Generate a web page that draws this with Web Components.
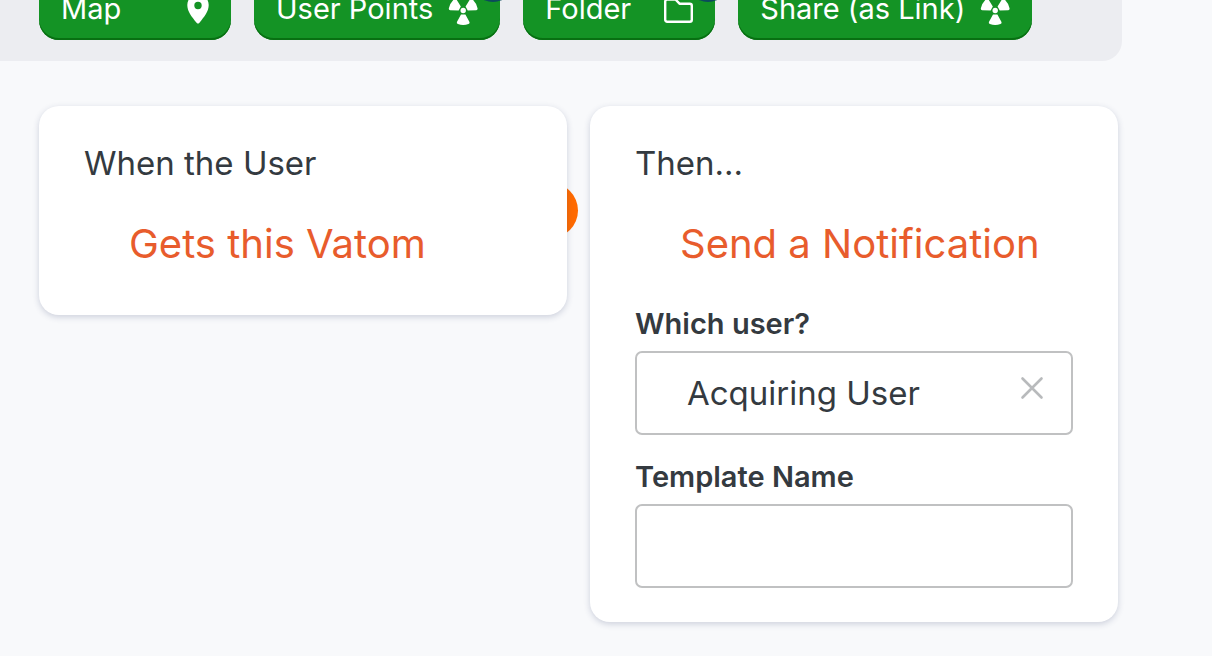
<!DOCTYPE html>
<html lang="en">
<head>
<meta charset="utf-8">
<meta name="viewport" content="width=device-width, initial-scale=1">
<title>Rule editor</title>
<style>
  body { margin: 0; background: #f8f9fb; color: #343a40; font-family: Inter, "Liberation Sans", sans-serif; }
</style>
</head>
<body>
<rule-editor></rule-editor>

<template id="rule-editor">
  <style>
    :host { display: block; overflow: hidden; }
    main { display: grid; grid-template-columns: repeat(2, minmax(0, 1fr)); gap: 23px; align-items: start; padding: 45px 94px 34px 39px; }
    .fields { display: grid; grid-template-columns: minmax(0, 1fr); gap: 24px; margin-top: 34px; }
  </style>
  <action-palette>
    <palette-button icon="pin">Map</palette-button>
    <palette-button icon="fan" badge>User Points</palette-button>
    <palette-button icon="folder" badge>Folder</palette-button>
    <palette-button icon="fan">Share (as Link)</palette-button>
  </action-palette>
  <main>
    <rule-card connector>
      <span slot="title">When the User</span>
      <span slot="action">Gets this Vatom</span>
    </rule-card>
    <rule-card>
      <span slot="title">Then...</span>
      <span slot="action">Send a Notification</span>
      <div class="fields">
        <form-field label="Which user?" value="Acquiring User" clearable></form-field>
        <form-field label="Template Name"></form-field>
      </div>
    </rule-card>
  </main>
</template>

<template id="action-palette">
  <style>
    :host { display: block; margin-right: 90px; background: #ecedf1; border-bottom-right-radius: 20px; }
    nav { display: flex; gap: 23px; margin-top: -24px; padding: 0 39px 21px; }
  </style>
  <nav aria-label="Actions"><slot></slot></nav>
</template>

<template id="palette-button">
  <style>
    :host { display: block; position: relative; }
    button { display: flex; align-items: center; justify-content: space-between; gap: 15px; box-sizing: border-box; min-width: 192px; height: 64px; padding: 2px 22px 0; border: 0; border-radius: 20px; background: #149325; color: #fff; font: 400 29px/36px Inter, "Liberation Sans", sans-serif; white-space: nowrap; box-shadow: inset 0 -2px 0 #087012; cursor: pointer; }
    svg { display: block; flex: none; width: 30px; height: 34px; }
    .badge { position: absolute; top: -18px; right: -15px; width: 44px; height: 44px; border-radius: 50%; background: #0b4a5c; }
  </style>
  <button type="button"><slot></slot></button>
</template>

<template id="rule-card">
  <style>
    :host { display: block; position: relative; z-index: 0; }
    section { padding: 34px 45px; border-radius: 20px; background: #fff; box-shadow: 0 2px 6px rgba(50, 65, 110, .22); }
    h2 { margin: 0 0 30px; font-size: 33px; line-height: 46px; font-weight: 400; }
    p { margin: 0 0 9px; padding-left: 45px; color: #e85c2c; font-size: 40px; line-height: 56px; white-space: nowrap; }
    .dot { position: absolute; z-index: -1; top: calc(50% - 28px); right: -11px; width: 55px; height: 55px; border-radius: 50%; background: #ff6a00; }
  </style>
  <section>
    <h2><slot name="title"></slot></h2>
    <p><slot name="action"></slot></p>
    <slot></slot>
  </section>
</template>

<template id="form-field">
  <style>
    :host { display: block; }
    label { display: block; margin-bottom: 9px; font-size: 29px; line-height: 36px; font-weight: 600; }
    .box { display: flex; box-sizing: border-box; height: 84px; border: 2px solid #c0c1c2; border-radius: 7px; background: #fff; }
    input { flex: 1; min-width: 0; border: 0; padding: 0 0 0 50px; background: none; color: inherit; font: 400 33px/46px Inter, "Liberation Sans", sans-serif; outline: 0; }
    button { flex: none; align-self: flex-start; padding: 23px 27px; border: 0; background: none; cursor: pointer; }
    svg { display: block; width: 24px; height: 24px; }
  </style>
  <label for="control"></label>
  <div class="box"><input id="control" type="text"></div>
</template>

<script>
  const stamp = (host, id) => {
    const root = host.attachShadow({ mode: "open" });
    root.append(document.getElementById(id).content.cloneNode(true));
    return root;
  };

  const blade = "M13 20.500h4.400L21.500 28Q22 29.500 20.500 30 15.200 31.800 9.900 30 8.400 29.500 8.900 28Z";
  const icons = {
    pin: '<svg viewBox="0 -3 30 34" fill="#fff" aria-hidden="true"><path fill-rule="evenodd" d="M19 -1C13 -1 8.300 4 8.300 10 8.300 16.500 12.500 21.500 17.800 28Q19 29.200 20.200 28C25.500 21.500 29.700 16.500 29.700 10 29.700 4 25 -1 19 -1ZM19 6.800a3.700 3.700 0 1 1 0 7.400 3.700 3.700 0 0 1 0-7.400Z"/></svg>',
    fan: '<svg viewBox="0 -2 30 34" fill="#fff" aria-hidden="true"><circle cx="15.200" cy="16.500" r="2.700"/>' +
      [0, 120, 240].map(a => `<path transform="rotate(${a} 15.200 16.500)" d="${blade}"/>`).join("") + '</svg>',
    folder: '<svg viewBox="0 -3 30 34" fill="none" stroke="#fff" stroke-width="2.400" stroke-linejoin="round" aria-hidden="true"><path d="M4 4.500H12.500L16.500 8.700H26.800a2 2 0 0 1 2 2V24.800a2 2 0 0 1-2 2H4.200a2 2 0 0 1-2-2V6.500a2 2 0 0 1 2-2Z"/></svg>'
  };

  customElements.define("palette-button", class extends HTMLElement {
    constructor() {
      super();
      const root = stamp(this, "palette-button");
      root.querySelector("button").insertAdjacentHTML("beforeend", icons[this.getAttribute("icon")] || "");
      if (this.hasAttribute("badge")) {
        root.querySelector("button").insertAdjacentHTML("afterend", '<span class="badge"></span>');
      }
    }
  });

  customElements.define("action-palette", class extends HTMLElement {
    constructor() { super(); stamp(this, "action-palette"); }
  });

  customElements.define("rule-card", class extends HTMLElement {
    constructor() {
      super();
      const root = stamp(this, "rule-card");
      if (this.hasAttribute("connector")) {
        root.querySelector("section").insertAdjacentHTML("afterend", '<span class="dot"></span>');
      }
    }
  });

  customElements.define("form-field", class extends HTMLElement {
    constructor() {
      super();
      const root = stamp(this, "form-field");
      root.querySelector("label").textContent = this.getAttribute("label");
      const input = root.querySelector("input");
      input.value = this.getAttribute("value") || "";
      if (this.hasAttribute("clearable")) {
        root.querySelector(".box").insertAdjacentHTML("beforeend", '<button type="button" aria-label="Clear"><svg viewBox="0 0 24 24" fill="none" stroke="#b8babc" stroke-width="2.600" stroke-linecap="round"><path d="M2.500 2.500l19 19M21.500 2.500l-19 19"/></svg></button>');
        root.querySelector("button").addEventListener("click", () => { input.value = ""; input.focus(); });
      }
    }
  });

  customElements.define("rule-editor", class extends HTMLElement {
    constructor() { super(); stamp(this, "rule-editor"); }
  });
</script>
</body>
</html>
